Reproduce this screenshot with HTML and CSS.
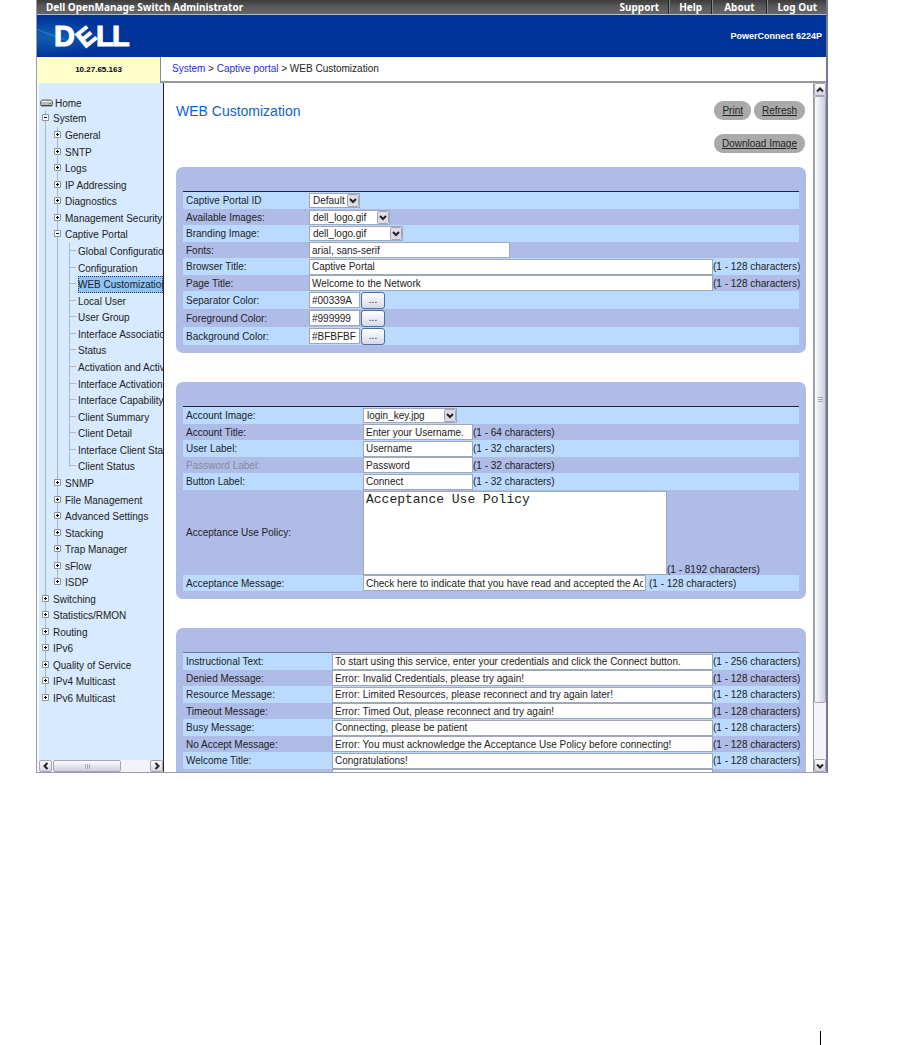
FILE: index.html
```html
<!DOCTYPE html>
<html lang="en">
<head>
  <meta charset="UTF-8">
  <meta name="viewport" content="width=device-width, initial-scale=1.0">
  <title>Dell OpenManage Switch Administrator</title>
  <link rel="stylesheet" href="styles.css">
</head>
<body>
  <svg class="defs" aria-hidden="true">
    <symbol id="plus" viewBox="0 0 7 7">
      <path d="M.5 .5h6v6h-6z" fill="#fff" stroke="#8a94a0"/>
      <path d="M2 3.5h3M3.5 2v3" stroke="#000"/>
    </symbol>
    <symbol id="minus" viewBox="0 0 7 7">
      <path d="M.5 .5h6v6h-6z" fill="#fff" stroke="#8a94a0"/>
      <path d="M2 3.5h3" stroke="#000"/>
    </symbol>
    <symbol id="chevron" viewBox="0 0 8 6">
      <path d="M1 1.5l3 3 3-3" fill="none" stroke="#222" stroke-width="2"/>
    </symbol>
  </svg>

  <div class="window">
    <header>
      <div class="topbar">
        <span class="product">Dell OpenManage Switch Administrator</span>
        <nav class="topnav">
          <a href="#">Support</a>
          <a href="#">Help</a>
          <a href="#">About</a>
          <a href="#">Log Out</a>
        </nav>
      </div>
      <div class="banner">
        <svg class="logo" viewBox="0 0 76 24" role="img" aria-label="Dell">
          <g fill="#fff" stroke="#fff" font-family="Liberation Sans, Arial, sans-serif" font-weight="bold" font-size="29">
            <text x="-1" y="22">D</text>
            <text x="-9" y="9" transform="translate(31 12) rotate(-39)" font-size="25">E</text>
            <text x="41" y="22">L</text>
            <text x="57" y="22">L</text>
          </g>
        </svg>
        <span class="model">PowerConnect 6224P</span>
      </div>
      <div class="subbar">
        <div class="ip">10.27.65.163</div>
        <div class="breadcrumb"><a href="#">System</a> &gt; <a href="#">Captive portal</a> &gt; WEB Customization</div>
      </div>
    </header>

    <div class="content">
      <aside class="sidebar">
        <nav class="tree">
          <a class="home" href="#">
            <svg class="drive" viewBox="0 0 13 8"><path d="M2.500 1h8l2 1.500v3q0 1.500-1.500 1.500h-9q-1.500 0-1.500-1.500v-3z" fill="#b8b8b8" stroke="#666"/><path d="M2 2.500h9" stroke="#f4f4f4"/><path d="M1 6.500h11" stroke="#444"/><path d="M9 4.500h2" stroke="#3a3"/></svg>
            Home
          </a>
          <ul class="level1">
            <li><a href="#"><svg class="box"><use href="#minus"/></svg>System</a>
              <ul class="level2">
                <li><a href="#"><svg class="box"><use href="#plus"/></svg>General</a></li>
                <li><a href="#"><svg class="box"><use href="#plus"/></svg>SNTP</a></li>
                <li><a href="#"><svg class="box"><use href="#plus"/></svg>Logs</a></li>
                <li><a href="#"><svg class="box"><use href="#plus"/></svg>IP Addressing</a></li>
                <li><a href="#"><svg class="box"><use href="#plus"/></svg>Diagnostics</a></li>
                <li><a href="#"><svg class="box"><use href="#plus"/></svg>Management Security</a></li>
                <li><a href="#"><svg class="box"><use href="#minus"/></svg>Captive Portal</a>
                  <ul class="level3">
                    <li><a href="#">Global Configuration</a></li>
                    <li><a href="#">Configuration</a></li>
                    <li><a class="active" href="#">WEB Customization</a></li>
                    <li><a href="#">Local User</a></li>
                    <li><a href="#">User Group</a></li>
                    <li><a href="#">Interface Association</a></li>
                    <li><a href="#">Status</a></li>
                    <li><a href="#">Activation and Activity</a></li>
                    <li><a href="#">Interface Activation</a></li>
                    <li><a href="#">Interface Capability</a></li>
                    <li><a href="#">Client Summary</a></li>
                    <li><a href="#">Client Detail</a></li>
                    <li><a href="#">Interface Client Status</a></li>
                    <li><a href="#">Client Status</a></li>
                  </ul>
                </li>
                <li><a href="#"><svg class="box"><use href="#plus"/></svg>SNMP</a></li>
                <li><a href="#"><svg class="box"><use href="#plus"/></svg>File Management</a></li>
                <li><a href="#"><svg class="box"><use href="#plus"/></svg>Advanced Settings</a></li>
                <li><a href="#"><svg class="box"><use href="#plus"/></svg>Stacking</a></li>
                <li><a href="#"><svg class="box"><use href="#plus"/></svg>Trap Manager</a></li>
                <li><a href="#"><svg class="box"><use href="#plus"/></svg>sFlow</a></li>
                <li><a href="#"><svg class="box"><use href="#plus"/></svg>ISDP</a></li>
              </ul>
            </li>
            <li><a href="#"><svg class="box"><use href="#plus"/></svg>Switching</a></li>
            <li><a href="#"><svg class="box"><use href="#plus"/></svg>Statistics/RMON</a></li>
            <li><a href="#"><svg class="box"><use href="#plus"/></svg>Routing</a></li>
            <li><a href="#"><svg class="box"><use href="#plus"/></svg>IPv6</a></li>
            <li><a href="#"><svg class="box"><use href="#plus"/></svg>Quality of Service</a></li>
            <li><a href="#"><svg class="box"><use href="#plus"/></svg>IPv4 Multicast</a></li>
            <li><a href="#"><svg class="box"><use href="#plus"/></svg>IPv6 Multicast</a></li>
          </ul>
        </nav>
        <div class="hscroll">
          <button type="button" aria-label="Scroll left"><svg class="chev left"><use href="#chevron"/></svg></button>
          <div class="thumb"><i class="grip"></i></div>
          <button type="button" class="end" aria-label="Scroll right"><svg class="chev right"><use href="#chevron"/></svg></button>
        </div>
      </aside>

      <main>
        <div class="heading">
          <h1>WEB Customization</h1>
          <div class="actions">
            <div class="pair">
              <a class="pill" href="#">Print</a>
              <a class="pill" href="#">Refresh</a>
            </div>
            <a class="pill" href="#">Download Image</a>
          </div>
        </div>

        <section class="panel">
          <table class="global">
            <tr>
              <th><label for="portal">Captive Portal ID</label></th>
              <td><div class="field"><select id="portal" class="w-default"><option>Default</option></select></div></td>
            </tr>
            <tr>
              <th><label for="available">Available Images:</label></th>
              <td><div class="field"><select id="available" class="w-image"><option>dell_logo.gif</option></select></div></td>
            </tr>
            <tr>
              <th><label for="branding">Branding Image:</label></th>
              <td><div class="field"><select id="branding" class="w-file"><option>dell_logo.gif</option></select></div></td>
            </tr>
            <tr>
              <th><label for="fonts">Fonts:</label></th>
              <td><div class="field"><input type="text" id="fonts" class="w-fonts" value="arial, sans-serif"></div></td>
            </tr>
            <tr>
              <th><label for="browser-title">Browser Title:</label></th>
              <td><div class="field"><input type="text" id="browser-title" class="wide" value="Captive Portal"><span class="hint">(1 - 128 characters)</span></div></td>
            </tr>
            <tr>
              <th><label for="page-title">Page Title:</label></th>
              <td><div class="field"><input type="text" id="page-title" class="wide" value="Welcome to the Network"><span class="hint">(1 - 128 characters)</span></div></td>
            </tr>
            <tr class="color">
              <th><label for="separator">Separator Color:</label></th>
              <td><div class="field"><input type="text" id="separator" class="w-color" value="#00339A"><button type="button" class="pick">...</button></div></td>
            </tr>
            <tr class="color">
              <th><label for="foreground">Foreground Color:</label></th>
              <td><div class="field"><input type="text" id="foreground" class="w-color" value="#999999"><button type="button" class="pick">...</button></div></td>
            </tr>
            <tr class="color">
              <th><label for="background">Background Color:</label></th>
              <td><div class="field"><input type="text" id="background" class="w-color" value="#BFBFBF"><button type="button" class="pick">...</button></div></td>
            </tr>
          </table>
        </section>

        <section class="panel">
          <table class="account">
            <tr>
              <th><label for="account-image">Account Image:</label></th>
              <td><div class="field"><select id="account-image" class="w-file"><option>login_key.jpg</option></select></div></td>
            </tr>
            <tr>
              <th><label for="account-title">Account Title:</label></th>
              <td><div class="field"><input type="text" id="account-title" class="w-label" value="Enter your Username."><span class="hint">(1 - 64 characters)</span></div></td>
            </tr>
            <tr>
              <th><label for="user-label">User Label:</label></th>
              <td><div class="field"><input type="text" id="user-label" class="w-label" value="Username"><span class="hint">(1 - 32 characters)</span></div></td>
            </tr>
            <tr>
              <th class="dim"><label for="password-label">Password Label:</label></th>
              <td><div class="field"><input type="text" id="password-label" class="w-label" value="Password"><span class="hint">(1 - 32 characters)</span></div></td>
            </tr>
            <tr>
              <th><label for="button-label">Button Label:</label></th>
              <td><div class="field"><input type="text" id="button-label" class="w-label" value="Connect"><span class="hint">(1 - 32 characters)</span></div></td>
            </tr>
            <tr class="policy">
              <th><label for="policy">Acceptance Use Policy:</label></th>
              <td><div class="field"><textarea id="policy">Acceptance Use Policy</textarea><span class="hint">(1 - 8192 characters)</span></div></td>
            </tr>
            <tr>
              <th><label for="accept-message">Acceptance Message:</label></th>
              <td><div class="field spaced"><input type="text" id="accept-message" class="w-message" value="Check here to indicate that you have read and accepted the Acceptance Use Policy."><span class="hint">(1 - 128 characters)</span></div></td>
            </tr>
          </table>
        </section>

        <section class="panel">
          <table class="messages">
            <tr>
              <th><label for="instructional">Instructional Text:</label></th>
              <td><div class="field"><input type="text" id="instructional" class="wide" value="To start using this service, enter your credentials and click the Connect button."><span class="hint">(1 - 256 characters)</span></div></td>
            </tr>
            <tr>
              <th><label for="denied">Denied Message:</label></th>
              <td><div class="field"><input type="text" id="denied" class="wide" value="Error: Invalid Credentials, please try again!"><span class="hint">(1 - 128 characters)</span></div></td>
            </tr>
            <tr>
              <th><label for="resource">Resource Message:</label></th>
              <td><div class="field"><input type="text" id="resource" class="wide" value="Error: Limited Resources, please reconnect and try again later!"><span class="hint">(1 - 128 characters)</span></div></td>
            </tr>
            <tr>
              <th><label for="timeout">Timeout Message:</label></th>
              <td><div class="field"><input type="text" id="timeout" class="wide" value="Error: Timed Out, please reconnect and try again!"><span class="hint">(1 - 128 characters)</span></div></td>
            </tr>
            <tr>
              <th><label for="busy">Busy Message:</label></th>
              <td><div class="field"><input type="text" id="busy" class="wide" value="Connecting, please be patient"><span class="hint">(1 - 128 characters)</span></div></td>
            </tr>
            <tr>
              <th><label for="no-accept">No Accept Message:</label></th>
              <td><div class="field"><input type="text" id="no-accept" class="wide" value="Error: You must acknowledge the Acceptance Use Policy before connecting!"><span class="hint">(1 - 128 characters)</span></div></td>
            </tr>
            <tr>
              <th><label for="welcome-title">Welcome Title:</label></th>
              <td><div class="field"><input type="text" id="welcome-title" class="wide" value="Congratulations!"><span class="hint">(1 - 128 characters)</span></div></td>
            </tr>
            <tr>
              <th></th>
              <td><div class="field"><input type="text" class="wide" aria-label="Welcome Text"><span class="hint"></span></div></td>
            </tr>
          </table>
        </section>
      </main>

      <div class="vscroll">
        <button type="button" aria-label="Scroll up"><svg class="chev up"><use href="#chevron"/></svg></button>
        <div class="thumb"><i class="grip"></i></div>
        <button type="button" class="end" aria-label="Scroll down"><svg class="chev"><use href="#chevron"/></svg></button>
      </div>
    </div>
  </div>

  <footer></footer>
</body>
</html>
```
FILE: styles.css
```css
* {
  box-sizing: border-box;
}
body {
  display: flex;
  flex-direction: column;
  min-height: 100vh;
  margin: 0;
  background-color: #fff;
  color: #222;
  font-family: "Liberation Sans", Arial, sans-serif;
  font-size: 10px;
}
a {
  color: inherit;
  text-decoration: none;
}
.defs {
  display: none;
}
.window {
  display: flex;
  flex-direction: column;
  height: 74vh;
  margin: 0 72px 0 36px;
  border: 1px solid #9a9ab4;
  border-top: none;
  border-right: 2px solid #77779a;
}

/* header */
.topbar {
  display: flex;
  justify-content: space-between;
  height: 15px;
  padding-left: 9px;
  border-bottom: 1px solid #b8bccb;
  background: linear-gradient(#3c3c3c, #5a5a5a 50%, #666);
  color: #fff;
  font-family: "Noto Sans", Tahoma, sans-serif;
  font-size: 10px;
  font-weight: bold;
  line-height: 15px;
}
.topnav {
  display: flex;
}
.topnav a {
  padding: 0 9px 0 10px;
}
.topnav a + a {
  border-left: 1px solid #222;
  box-shadow: inset 1px 0 #888;
}
.topnav a:nth-child(3) {
  padding: 0 12px;
}
.banner {
  display: flex;
  align-items: center;
  justify-content: space-between;
  height: 42px;
  padding: 0 4px 0 18px;
  background:
    linear-gradient(20deg, transparent 48%, rgba(70, 170, 230, 0.4) 50%, transparent 53%) 0 0 / 34px 42px no-repeat,
    radial-gradient(ellipse 60px 20px at 12px 22px, #1060b4, #00339a);
  color: #fff;
}
.logo {
  width: 76px;
  height: 24px;
  overflow: visible;
}
.model {
  font-size: 9px;
  font-weight: bold;
}
.subbar {
  display: flex;
  height: 26px;
}
.ip {
  width: 124px;
  border-right: 1px solid #888;
  background-color: #ffffcc;
  color: #000;
  font-size: 8px;
  font-weight: bold;
  line-height: 26px;
  text-align: center;
}
.breadcrumb {
  flex: 1;
  padding-left: 11px;
  border-bottom: 2px solid #999;
  line-height: 24px;
}
.breadcrumb a {
  color: #2a2ae0;
}

/* navigation tree */
.content {
  display: flex;
  flex: 1;
  min-height: 0;
}
.sidebar {
  display: flex;
  flex-direction: column;
  width: 127px;
  border-left: 2px solid #f4f8ff;
  border-right: 1px solid #222;
  background-color: #d8eaff;
}
.tree {
  flex: 1;
  min-height: 0;
  padding-top: 13px;
  overflow: hidden;
  white-space: nowrap;
}
.tree ul {
  margin: 0;
  padding: 0;
  list-style: none;
}
.home {
  display: flex;
  align-items: center;
  height: 14px;
  gap: 2px;
  padding-left: 1px;
}
.drive {
  width: 13px;
  height: 8px;
}
.tree li > a {
  display: flex;
  align-items: center;
  height: 17px;
}
.tree li:nth-child(7n+2) > a,
.tree li:nth-child(7n+4) > a,
.tree li:nth-child(7n+6) > a {
  height: 16px;
}
.level1,
.level2,
.level3 {
  background: linear-gradient(#aab8c8, #aab8c8) 6px 0 / 1px calc(100% - 8px) no-repeat;
}
.level1 > li > a {
  padding-left: 3px;
}
.tree .level2 {
  background-position: 18px 0;
}
.level2 > li > a {
  padding-left: 15px;
}
.tree .level3 {
  background-position: 30px 0;
}
.level3 > li {
  padding-left: 39px;
  background: linear-gradient(#aab8c8, #aab8c8) 31px 7px / 6px 1px no-repeat;
}
.box {
  width: 7px;
  height: 7px;
  margin: 0 4px 2px 0;
}
.active {
  outline: 1px dotted #335;
  outline-offset: -1px;
  background-color: #8fc4f5;
}

/* scrollbars */
.hscroll,
.vscroll {
  display: flex;
  background-color: #f2f2f8;
}
.hscroll {
  height: 12px;
}
.vscroll {
  flex-direction: column;
  width: 13px;
  border-left: 1px solid #999;
}
.hscroll button,
.vscroll button {
  display: flex;
  align-items: center;
  justify-content: center;
  width: 13px;
  height: 12px;
  padding: 0;
  border: 1px solid #a4a4b4;
  border-radius: 2px;
  background: linear-gradient(#fff, #d4d4e2);
}
.vscroll button {
  width: 12px;
  height: 13px;
}
.hscroll .end {
  margin-left: auto;
}
.vscroll .end {
  margin-top: auto;
}
.thumb {
  display: flex;
  align-items: center;
  justify-content: center;
  border: 1px solid #a4a4b4;
  border-radius: 2px;
}
.hscroll .thumb {
  width: 55%;
  margin-left: 1px;
  background: linear-gradient(#fafaff, #cfcfe0);
}
.vscroll .thumb {
  height: 88%;
  background: linear-gradient(90deg, #fafaff, #cfcfe0);
}
.grip {
  width: 5px;
  height: 5px;
  background: repeating-linear-gradient(#a8a8b8 0 1px, transparent 1px 2px);
}
.hscroll .grip {
  background: repeating-linear-gradient(90deg, #a8a8b8 0 1px, transparent 1px 2px);
}
.chev {
  width: 8px;
  height: 6px;
}
.up {
  transform: rotate(180deg);
}
.left {
  transform: rotate(90deg);
}
.right {
  transform: rotate(-90deg);
}

/* main area */
main {
  flex: 1;
  min-width: 0;
  padding: 18px 7px 0 12px;
  overflow: hidden;
}
.heading {
  display: flex;
  justify-content: space-between;
  margin-bottom: 14px;
}
h1 {
  margin: 0;
  color: #0f62cc;
  font-size: 14px;
  font-weight: normal;
  line-height: 20px;
}
.actions {
  display: flex;
  flex-direction: column;
  align-items: flex-end;
  gap: 14px;
  padding-right: 1px;
}
.pair {
  display: flex;
  gap: 3px;
}
.pill {
  height: 19px;
  padding: 0 8px;
  border-radius: 9px;
  background-color: #aaa;
  line-height: 20px;
  text-decoration: underline;
}
.panel {
  margin-bottom: 29px;
  padding: 24px 7px 8px;
  border-radius: 7px;
  background-color: #afbce8;
}
table {
  width: 100%;
  border-top: 1px solid #223;
  border-spacing: 0;
  table-layout: fixed;
}
.messages {
  border-top-color: #778;
}
th,
td {
  height: 16px;
  padding: 0;
}
th {
  padding-left: 3px;
  font-weight: normal;
  text-align: left;
}
tr:nth-child(odd) {
  background-color: #badbff;
}
tr:nth-child(odd) > * {
  height: 17px;
}
.color > * {
  height: 18px;
}
tr.color:nth-child(odd) > * {
  height: 18px;
}
tr.policy > * {
  height: 85px;
}
.account tr:last-child > * {
  height: 16px;
}
.global th {
  width: 126px;
}
.account th {
  width: 180px;
}
.messages th {
  width: 149px;
}
.account .dim {
  color: #868a9c;
}
.field {
  display: flex;
  align-items: center;
  height: 100%;
  white-space: nowrap;
}
.spaced {
  gap: 3px;
}
.field input,
.field select,
.field textarea {
  margin: 0;
  border: 1px solid #a0a8b8;
  border-radius: 0;
  background-color: #fff;
  color: #222;
  font-family: inherit;
  font-size: 10px;
}
.field input {
  height: 16px;
  padding: 0 2px;
}
.field select {
  height: 15px;
  padding: 0 0 0 3px;
  appearance: none;
  background: #fff url("data:image/svg+xml,%3Csvg xmlns='http://www.w3.org/2000/svg' width='12' height='13'%3E%3Crect x='.5' y='.5' width='11' height='12' rx='1' fill='%23dcdce6' stroke='%23a4a4b4'/%3E%3Cpath d='M3 5l3 3 3-3' fill='none' stroke='%23222' stroke-width='2'/%3E%3C/svg%3E") right center no-repeat;
}
.field textarea {
  width: 304px;
  height: 84px;
  padding: 0 2px;
  font-family: "Liberation Mono", "Courier New", monospace;
  font-size: 13px;
  line-height: 15px;
  resize: none;
}
.policy .field {
  align-items: flex-end;
}
.field .wide {
  flex: 1;
  min-width: 0;
}
.wide + .hint {
  width: 86px;
}
.w-default {
  width: 51px;
}
.w-image {
  width: 81px;
}
.w-file {
  width: 94px;
}
.w-fonts {
  width: 201px;
}
.w-color {
  width: 51px;
}
.w-label {
  width: 110px;
}
.w-message {
  width: 283px;
}
.pick {
  width: 24px;
  height: 17px;
  margin-left: 1px;
  padding: 0;
  border: 1px solid #4a6fa5;
  border-radius: 3px;
  background: linear-gradient(#fff, #d6d9ea);
  color: #222;
  font-family: inherit;
  font-size: 10px;
  line-height: 12px;
}

footer {
  height: 14px;
  margin: auto 79px 0;
  border-right: 1px solid #000;
}
```
